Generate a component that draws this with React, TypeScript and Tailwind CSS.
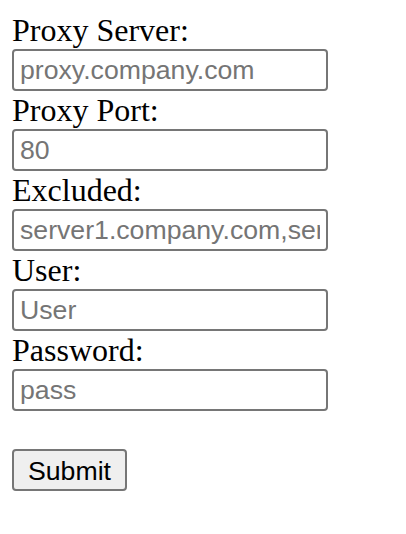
import React from "react";

const fields = [
  { label: "Proxy Server:", placeholder: "proxy.company.com", type: "text" },
  { label: "Proxy Port:", placeholder: "80", type: "text" },
  { label: "Excluded:", placeholder: "server1.company.com,server2.company.com", type: "text" },
  { label: "User:", placeholder: "User", type: "text" },
  { label: "Password:", placeholder: "pass", type: "password" },
];

export default function App() {
  return (
    <div className="min-h-[534px] w-full bg-white pt-[12px] pl-[12px]">
      <form className="flex flex-col items-start" onSubmit={(e) => e.preventDefault()}>
        {fields.map((f) => (
          <div key={f.label} className="flex flex-col items-start">
            <label className="h-[37px] text-[32px] leading-[37px] text-black [font-family:'Liberation_Serif',serif]">
              {f.label}
            </label>
            <input
              type={f.type}
              placeholder={f.placeholder}
              className="mb-[1px] box-border h-[42px] w-[316px] rounded-[4px] border-2 border-[#767676] bg-white px-[6px] text-[26.67px] text-black outline-none placeholder:text-[#757575] [font-family:'Liberation_Sans',Arial,sans-serif]"
            />
          </div>
        ))}
        <button
          type="submit"
          className="mt-[37px] box-border h-[42px] w-[115px] rounded-[4px] border-2 border-[#767676] bg-[#efefef] text-[26.67px] text-black [font-family:'Liberation_Sans',Arial,sans-serif]"
        >
          Submit
        </button>
      </form>
    </div>
  );
}
